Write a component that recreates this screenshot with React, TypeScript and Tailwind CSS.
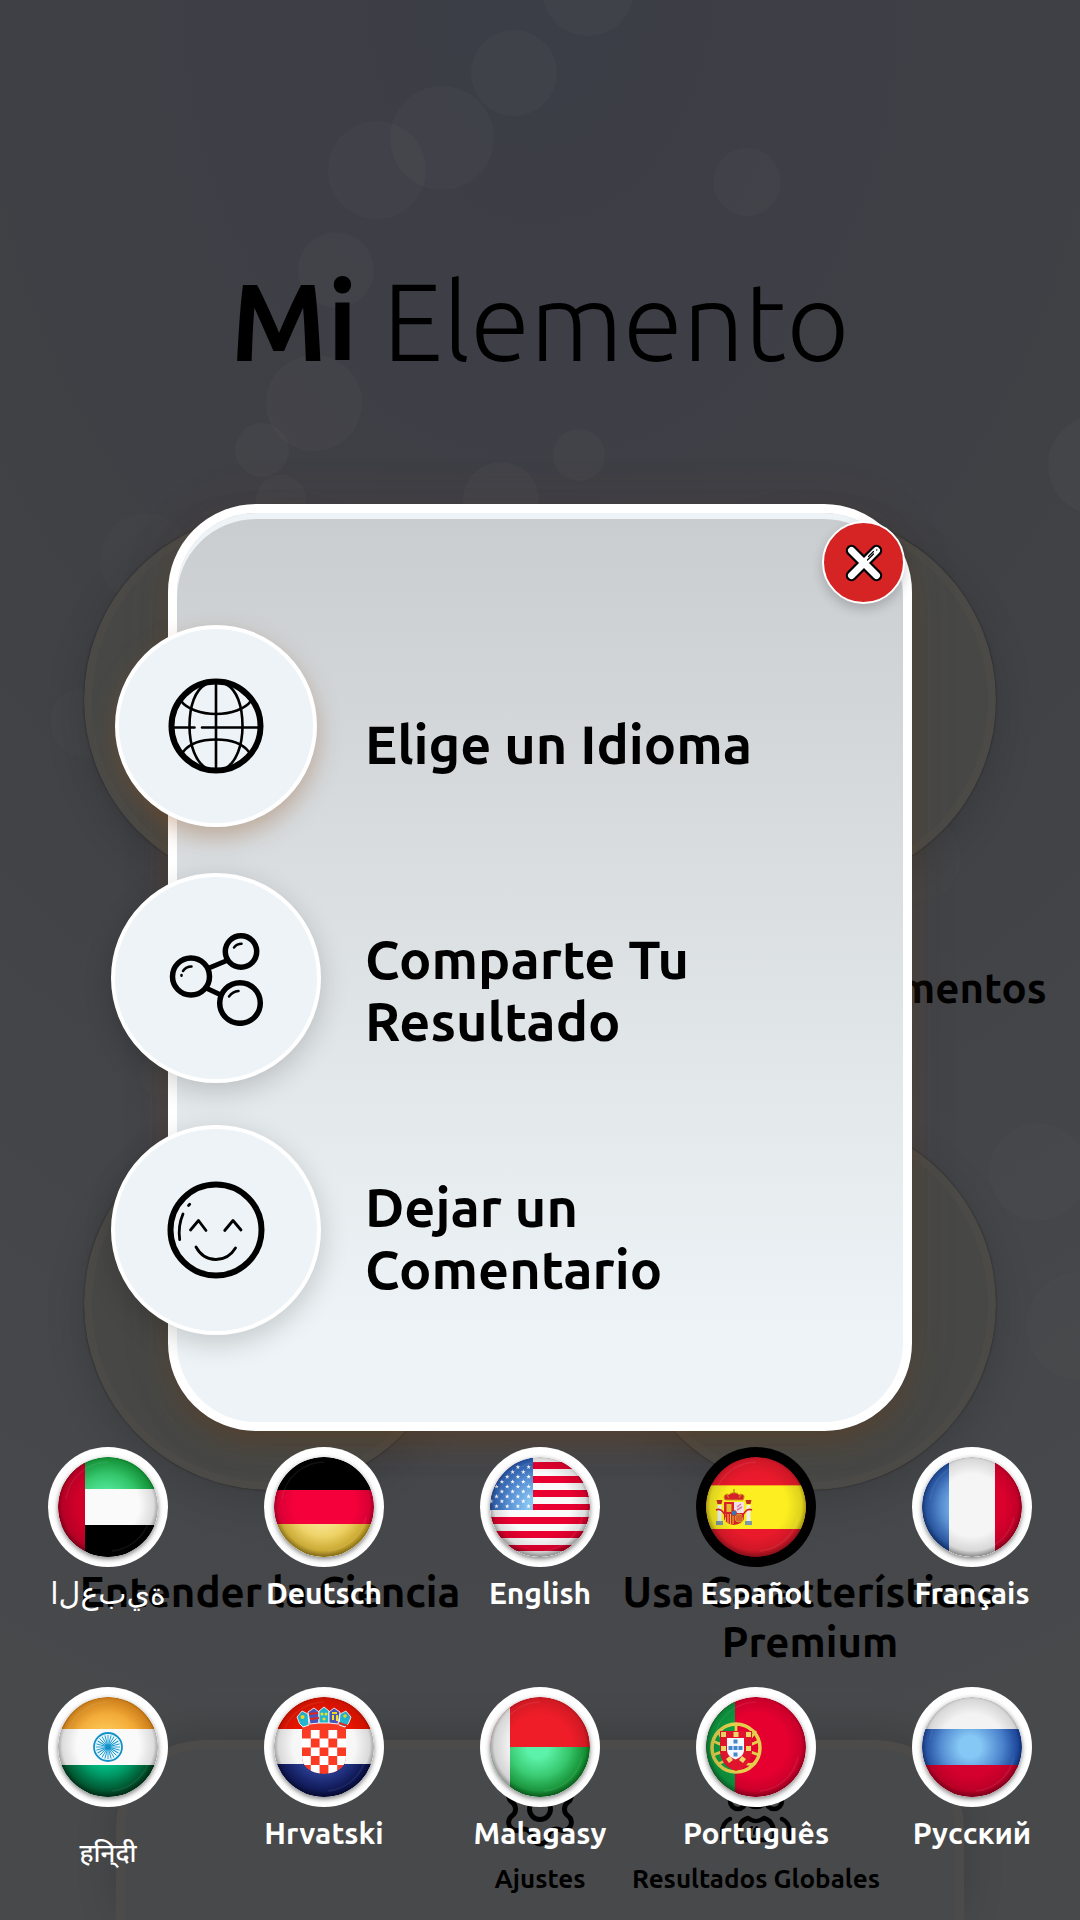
import type { ReactNode } from "react";
import { Settings } from "lucide-react";

/* Soft bubbles floating behind the page: x, y of the centre and radius. */
const bubbles = [
  [588, -10, 46], [514, 73, 43], [442, 138, 52], [377, 170, 49], [747, 182, 34],
  [336, 270, 38], [314, 403, 48], [262, 450, 27], [281, 500, 25], [579, 455, 26],
  [501, 500, 38], [1098, 465, 50],
];

/* The fainter ones, lower on the page. */
const faintBubbles = [
  [146, 559, 46], [85, 722, 35], [918, 858, 43], [1038, 1172, 49], [1080, 1326, 54], [160, 1075, 20],
];

function GlobeIcon() {
  return (
    <svg viewBox="0 0 96 96" className="size-24" fill="none" stroke="#000" strokeLinecap="round" aria-hidden="true">
      <circle cx="48" cy="48" r="44.5" strokeWidth="6" />
      <g strokeWidth="2.6">
        <path d="M48 5v86M6 49.5h20.5M34 49.5h56" />
        <path d="M13 23c6 8 20 13 35 13s29-5 35-13M15 74c6-8 18-12.500 33-12.500S75 66 81 74" />
        <path d="M38 6C27 12 21.500 28 21.500 48S28 84 38 90M58 6c11 6 16.500 22 16.500 42S68 84 58 90" />
      </g>
    </svg>
  );
}

function ShareIcon() {
  return (
    <svg viewBox="0 0 96 96" className="size-24" fill="none" stroke="#000" strokeLinecap="round" aria-hidden="true">
      <g strokeWidth="5.500">
        <circle cx="23" cy="46.500" r="18.500" />
        <circle cx="73" cy="21.500" r="15.700" />
        <circle cx="72" cy="73" r="20.300" />
        <path d="M41 38l18-7.500M38 58l15 7" strokeWidth="5" />
      </g>
      <g strokeWidth="2.500">
        <path d="M15 41c2-3 5-4.500 8.500-4.500M13.500 45v.8" />
        <path d="M66 17.500c2-2.500 4.500-3.700 7.500-3.700M61 66.500c2.500-3.500 5.500-5.200 9.500-5.500" />
      </g>
    </svg>
  );
}

function SmileIcon() {
  return (
    <svg viewBox="0 0 98 98" className="size-[98px]" fill="none" stroke="#000" strokeLinecap="round" strokeLinejoin="round" aria-hidden="true">
      <circle cx="49" cy="49" r="45.500" strokeWidth="6" />
      <g strokeWidth="2.800">
        <path d="M23.500 49l8-9.500 7.500 10M57.700 49.500l8.300-10 8 9.500" />
        <path d="M29 66c9 16.500 30 16.500 39.500 1M16 33c-3.500 8-4.500 17-3.300 25.600M21.500 24.500l1.200-1.200" />
      </g>
    </svg>
  );
}

function CrossIcon() {
  return (
    <svg viewBox="0 0 38 38" className="size-[38px]" fill="none" strokeLinecap="round" aria-hidden="true">
      <path d="M6.500 6.500l25 25M31.500 6.500l-25 25" stroke="#000" strokeWidth="11.500" />
      <path d="M6.500 6.500l25 25M31.500 6.500l-25 25" stroke="#fff" strokeWidth="7" />
      <path d="M22.500 16l6-6M31.500 6.200l.4-.4M23.500 12.500l5-5" stroke="#000" strokeWidth="1.200" />
    </svg>
  );
}

function PeopleIcon() {
  return (
    <svg viewBox="0 0 84 84" className="size-[84px]" fill="none" stroke="#000" strokeWidth="4.500" strokeLinecap="round" strokeLinejoin="round" aria-hidden="true">
      <circle cx="42" cy="27" r="13" />
      <circle cx="24" cy="34" r="8" />
      <circle cx="60" cy="34" r="8" />
      <path d="M24 73v-6c0-9 4-14 10-16 5 4 11 4 16 0 6 2 10 7 10 16v6z" />
      <path d="M8 72v-5c0-8 3-13 8-15M76 72v-5c0-8-3-13-8-15" />
      <path d="M34 68c0-4 2-7 4-8M40 67c0-3 1-6 3-7" strokeWidth="2" />
    </svg>
  );
}

/* A flag on a glossy ball; `children` is drawn on a 100 x 100 field. */
function Ball({ id, children }: { id: string; children: ReactNode }) {
  return (
    <svg viewBox="0 0 100 100" className="size-[100px] rounded-full shadow-[0_2px_5px_rgba(0,0,0,0.5)]" aria-hidden="true">
      <defs>
        <clipPath id={"c-" + id}><circle cx="50" cy="50" r="50" /></clipPath>
        <radialGradient id={"d-" + id} cx="50%" cy="48%" r="52%">
          <stop offset="0.6" stopColor="#000" stopOpacity="0" />
          <stop offset="0.88" stopColor="#000" stopOpacity="0.12" />
          <stop offset="1" stopColor="#000" stopOpacity="0.45" />
        </radialGradient>
      </defs>
      <g clipPath={"url(#c-" + id + ")"}>
        {children}
        <circle cx="50" cy="50" r="50" fill={"url(#d-" + id + ")"} />
        <path d="M8 42A43 43 0 0 1 50 5M92 60A43 43 0 0 1 54 94" fill="none" stroke="#fff" strokeOpacity="0.07" strokeWidth="1.500" />
      </g>
    </svg>
  );
}

/* Shine that lightens a coloured band towards the ball's middle. */
function Shine({ id, color }: { id: string; color: string }) {
  return (
    <radialGradient id={id} gradientUnits="userSpaceOnUse" cx="48" cy="50" r="54">
      <stop offset="0.2" stopColor={color} stopOpacity="1" />
      <stop offset="1" stopColor={color} stopOpacity="0" />
    </radialGradient>
  );
}

const starPath = "M0-2.300l.6 1.600h1.700L.9.300l.5 1.700L0 1l-1.400 1 .5-1.700L-2.300-.7h1.700z";

const stars: number[][] = [];
for (let row = 0; row < 9; row++) {
  for (let col = 0; col < 4; col++) {
    stars.push([(row % 2 ? 33.300 : 38.600) - col * 10.700, 10 + row * 4.900]);
  }
}

const flags: Record<string, ReactNode> = {
  ae: (
    <>
      <defs><Shine id="ae-s" color="#5cf0a8" /></defs>
      <path d="M0 0h100v32H0z" fill="#0f9e33" />
      <path d="M0 0h100v32H0z" fill="url(#ae-s)" />
      <path d="M0 32h100v36H0z" fill="#fafafa" />
      <path d="M0 68h100v32H0z" fill="#000" />
      <path d="M0 0h27v100H0z" fill="#d0002a" />
    </>
  ),
  de: (
    <>
      <defs><Shine id="de-s" color="#fbeaa0" /></defs>
      <path d="M0 0h100v33H0z" fill="#000" />
      <path d="M0 33h100v34H0z" fill="#f5003a" />
      <path d="M0 67h100v33H0z" fill="#dfb51f" />
      <path d="M0 67h100v33H0z" fill="url(#de-s)" />
    </>
  ),
  us: (
    <>
      <defs><Shine id="us-s" color="#86c4f2" /></defs>
      <path d="M0 0h100v100H0z" fill="#fafafa" />
      <path d="M0 5h100v7H0zM0 19h100v7H0zM0 33h100v7H0zM0 47h100v6H0zM0 60h100v7H0zM0 74h100v7H0zM0 88h100v6H0z" fill="#ea0030" />
      <path d="M0 0h43v53H0z" fill="#1d4fae" />
      <path d="M0 0h43v53H0z" fill="url(#us-s)" />
      {stars.map(([x, y]) => (
        <path key={x + "-" + y} d={starPath} transform={"translate(" + x + " " + y + ")"} fill="#fff" />
      ))}
    </>
  ),
  es: (
    <>
      <path d="M0 0h100v100H0z" fill="#ea1a2c" />
      <path d="M0 28h100v44H0z" fill="#fcee20" />
      <path d="M0 28h100v1H0z" fill="#f7a520" />
      <path d="M18 45h20v17q-2 5-10 6-8-1-10-6z" fill="#d8202c" />
      <path d="M28 45h10v11H28z" fill="#f3dfe6" />
      <path d="M20.500 47h5v8h-5z" fill="#e2ba2c" />
      <path d="M19.500 57v7M22 57v9M24.500 57v10M27 57v10" stroke="#f2c832" strokeWidth="1" />
      <circle cx="33" cy="61" r="4" fill="#d8642c" stroke="#c9a128" />
      <path d="M31 50l4-3M31 53l5-3" stroke="#d47b9b" strokeWidth="1.500" />
      <circle cx="28" cy="56" r="2.600" fill="#3378bb" stroke="#c0392b" strokeWidth="0.800" />
      <path d="M19 43c-3-5 2-7 4-5 1-3 9-3 10 0 3-2 7 0 4 5z" fill="#d8202c" stroke="#c9971c" strokeWidth="1" />
      <path d="M28 32v4M21 38l2 3M35 38l-2 3" stroke="#b88918" strokeWidth="1.300" />
      <path d="M11.500 48h4v16h-4zM40.500 48h4v16h-4z" fill="#eceef0" />
      <path d="M10 64h7v4h-7zM39 64h7v4h-7z" fill="#7d98a8" />
      <path d="M10.500 43h6l-1 4h-4zM39.500 43h6l-1 4h-4z" fill="#c22c22" />
      <path d="M10 53q4-2 7 2t2 5M46 53q-4-2-7 2t-2 5" stroke="#d8202c" strokeWidth="1.600" fill="none" />
    </>
  ),
  fr: (
    <>
      <defs><Shine id="fr-s" color="#8cc6f5" /></defs>
      <path d="M0 0h100v100H0z" fill="#f5f5f5" />
      <path d="M0 0h27v100H0z" fill="#10409f" />
      <path d="M0 0h27v100H0z" fill="url(#fr-s)" />
      <path d="M73 0h27v100H73z" fill="#dc002d" />
    </>
  ),
  in: (
    <>
      <defs><Shine id="in-o" color="#ffcf5c" /><Shine id="in-g" color="#00d69a" /></defs>
      <path d="M0 0h100v32H0z" fill="#e88a17" />
      <path d="M0 0h100v32H0z" fill="url(#in-o)" />
      <path d="M0 32h100v36H0z" fill="#fafafa" />
      <path d="M0 68h100v32H0z" fill="#003f1a" />
      <path d="M0 68h100v32H0z" fill="url(#in-g)" />
      <circle cx="50" cy="50" r="14" fill="#e9f6fb" stroke="#1391c9" strokeWidth="1.800" />
      {Array.from({ length: 24 }, (_, i) => (
        <path key={i} d="M50 48V38" transform={"rotate(" + i * 15 + " 50 50)"} stroke="#1b9ad0" strokeWidth="0.900" />
      ))}
      <circle cx="50" cy="50" r="2.600" fill="#1391c9" />
    </>
  ),
  hr: (
    <>
      <defs><Shine id="hr-s" color="#3c57b4" /></defs>
      <path d="M0 0h100v32H0z" fill="#ea1500" />
      <path d="M0 32h100v35H0z" fill="#f7f7f7" />
      <path d="M0 67h100v33H0z" fill="#060b4a" />
      <path d="M0 67h100v33H0z" fill="url(#hr-s)" />
      <clipPath id="hr-k"><path d="M28 27q22-5 44 0v32q0 16-22 18-22-2-22-18z" /></clipPath>
      <g clipPath="url(#hr-k)">
        <path d="M28 20h44v60H28z" fill="#fb3a24" />
        <path d="M36.800 33h8.800v8.500h-8.800zM54.400 33h8.800v8.500h-8.800zM28 41.500h8.800v9H28zM45.600 41.500h8.800v9h-8.800zM63.200 41.500H72v9h-8.800zM36.800 50.500h8.800V59h-8.800zM54.400 50.500h8.800V59h-8.800zM28 59h8.800v9H28zM45.600 59h8.800v9h-8.800zM63.200 59H72v9h-8.800zM36.800 68h8.800v9h-8.800zM54.400 68h8.800v9h-8.800z" fill="#fff" />
      </g>
      <g stroke="#fff" strokeWidth="0.900" strokeLinejoin="round">
        <path d="M23 20l5-6 6 3 1 11-6 2q-4-2-6-10z" fill="#24b5cf" />
        <path d="M34 15l6-4 5 4v11l-9 1z" fill="#4a55b8" />
        <path d="M45 14l5-4 5 4v12H45z" fill="#24b5cf" />
        <path d="M55 15l5-4 6 4-2 12-9-1z" fill="#4a55b8" />
        <path d="M66 17l6-3 5 6q-2 8-6 10l-6-2z" fill="#24b5cf" />
      </g>
      <path d="M35 17l9-1M36 22l9-1M65 26l9 3" stroke="#e52620" strokeWidth="2.200" />
      <path d="M58 16h5M59 18v5M63 18v6" stroke="#f3df21" strokeWidth="2" />
      <circle cx="28.500" cy="20" r="2" fill="#f3df21" />
      <circle cx="48" cy="17" r="1.500" fill="#f3df21" />
      <circle cx="52" cy="17" r="1.500" fill="#f3df21" />
      <circle cx="50" cy="22" r="1.500" fill="#f3df21" />
      <circle cx="71" cy="19" r="1.800" fill="#f3df21" />
    </>
  ),
  mg: (
    <>
      <defs><Shine id="mg-s" color="#5cf2a9" /></defs>
      <path d="M0 0h100v50H0z" fill="#ee1d28" />
      <path d="M0 50h100v50H0z" fill="#0c9528" />
      <path d="M0 50h100v50H0z" fill="url(#mg-s)" />
      <path d="M0 0h20v100H0z" fill="#f1f1f1" />
    </>
  ),
  pt: (
    <>
      <path d="M0 0h100v100H0z" fill="#e60030" />
      <path d="M0 0h29v100H0z" fill="#0d9b41" />
      <g fill="none" stroke="#e3cf4c">
        <circle cx="30" cy="51" r="24" strokeWidth="3.500" />
        <path d="M7 44q23 12 46 0M7 58q23-10 46 0M30 26v50M12 34q20 40 38 32M12 67q20-8 38-33" strokeWidth="2.800" />
      </g>
      <path d="M14 34h32v21q-2 15-16 19-14-4-16-19z" fill="#e0142c" />
      <g fill="#ecd668">
        <path d="M15 35h5v5h-5zM27.500 35h5v5h-5zM40 35h5v5h-5zM15 49h5v5h-5zM40 49h5v5h-5zM20 62l4-3 3 4-4 3zM40 62l-4-3-3 4 4 3z" />
      </g>
      <path d="M21 41h17v13q-1 6-8.500 8.500Q22 60 21 54z" fill="#f6f8fc" />
      <path d="M27.500 42.500h4v4h-4zM22.500 49h4v4h-4zM27.500 49h4v4h-4zM32.500 49h4v4h-4zM27.500 55.500h4v4h-4z" fill="#4488cc" />
    </>
  ),
  ru: (
    <>
      <defs><Shine id="ru-s" color="#86c8f5" /></defs>
      <path d="M0 0h100v32H0z" fill="#f3f3f3" />
      <path d="M0 32h100v36H0z" fill="#123fa5" />
      <path d="M0 32h100v36H0z" fill="url(#ru-s)" />
      <path d="M0 68h100v32H0z" fill="#d4002d" />
    </>
  ),
};

const languages = [
  { code: "ae", name: "ا\u200cل\u200cع\u200cب\u200cي\u200cة" },
  { code: "de", name: "Deutsch" },
  { code: "us", name: "English" },
  { code: "es", name: "Español", active: true },
  { code: "fr", name: "Français" },
  { code: "in", name: "हनि्दी" },
  { code: "hr", name: "Hrvatski" },
  { code: "mg", name: "Malagasy" },
  { code: "pt", name: "Português" },
  { code: "ru", name: "Русский" },
];

function labelClass(code: string) {
  if (code === "ae") return "text-[30px] leading-9 font-medium [direction:ltr] [unicode-bidi:bidi-override]";
  if (code === "in") return "text-[26px] leading-[76px] font-medium";
  return "text-[30px] leading-9 font-semibold";
}

const menu = [
  { label: "Elige un Idioma", icon: <GlobeIcon />, active: true, pad: "pt-9" },
  { label: "Comparte Tu Resultado", icon: <ShareIcon />, pad: "pt-6" },
  { label: "Dejar un Comentario", icon: <SmileIcon />, pad: "pt-4" },
];

const sections = ["", "Descubre los Elementos", "Entender la Ciencia", "Usa Características Premium"];

function Home() {
  return (
    <main className="flex min-h-screen flex-col">
      <h1 className="pt-[249px] text-center text-[109px] leading-[144px] font-light">
        <b className="font-bold">Mi</b> Elemento
      </h1>
      <div className="mt-[121px] grid grid-cols-2 gap-y-[105px]">
        {sections.map((label, i) => (
          <section key={i} className="flex flex-col items-center">
            <div className="size-[372px] rounded-full border-8 border-[#4b4a47] bg-[#474846] shadow-[0_12px_40px_rgba(0,0,0,0.14),0_0_2px_rgba(0,0,0,0.5)]" />
            <h2 className="mt-[77px] min-h-[50px] max-w-[500px] text-center text-[42px] leading-[50px] font-semibold">{label}</h2>
          </section>
        ))}
      </div>
      <footer className="mx-[116px] mt-[73px] grid flex-1 grid-cols-3 rounded-t-[88px] border-[9px] border-b-0 border-[#4d4b4a] bg-[#48494a] px-[91px] pt-[18px] shadow-[0_-8px_40px_rgba(0,0,0,0.16)]">
        <div className="col-start-2 flex flex-col items-center gap-3">
          <Settings size={84} strokeWidth={1.4} aria-hidden="true" />
          <span className="text-[26px] leading-8 font-semibold">Ajustes</span>
        </div>
        <div className="flex flex-col items-center gap-3">
          <PeopleIcon />
          <span className="text-[26px] leading-8 font-semibold whitespace-nowrap">Resultados Globales</span>
        </div>
      </footer>
    </main>
  );
}

function OptionsDialog() {
  return (
    <div role="dialog" aria-label="Opciones" className="relative mx-[168px] rounded-[88px] border-[9px] border-white bg-linear-to-b from-[#cacdd0] to-[#edf3f6] to-90% pt-[87px] pb-[66px] shadow-[inset_0_6px_0_#edf3f6,0_0_50px_rgba(110,70,50,0.12),0_16px_32px_-8px_rgba(100,58,20,0.5)]">
      <button type="button" aria-label="Cerrar" className="absolute top-2 -right-[2px] flex size-[83px] items-center justify-center rounded-full border-2 border-white bg-[#d62424] shadow-[0_5px_12px_rgba(0,0,0,0.2)]">
        <CrossIcon />
      </button>
      <ul className="-ml-[66px]">
        {menu.map((item) => (
          <li key={item.label}>
            <button type="button" className="flex h-[252px] w-full items-center gap-11 text-left">
              <span className="flex w-[210px] shrink-0 justify-center">
                <span
                  className={
                    item.active
                      ? "flex size-[202px] items-center justify-center rounded-full border-4 border-white bg-[#edf3f6] shadow-[0_10px_24px_rgba(140,80,30,0.36)]"
                      : "flex size-[210px] items-center justify-center rounded-full border-4 border-white bg-[#edf3f6] shadow-[0_8px_28px_rgba(0,0,0,0.18)]"
                  }
                >
                  {item.icon}
                </span>
              </span>
              <span className={"max-w-[400px] text-[54px] leading-[62px] font-semibold " + item.pad}>{item.label}</span>
            </button>
          </li>
        ))}
      </ul>
    </div>
  );
}

function LanguagePicker() {
  return (
    <ul className="relative mt-4 grid grid-cols-5 gap-y-[76px]">
      {languages.map((lang) => (
        <li key={lang.code} className="h-[164px]">
          <button type="button" aria-pressed={!!lang.active} className="flex w-full flex-col items-center gap-2 text-white">
            <span className={lang.active ? "rounded-full bg-black p-2.5" : "rounded-full bg-white p-2.5"}>
              <Ball id={lang.code}>{flags[lang.code]}</Ball>
            </span>
            <span className={"whitespace-nowrap " + labelClass(lang.code)}>{lang.name}</span>
          </button>
        </li>
      ))}
    </ul>
  );
}

export default function App() {
  return (
    <div className="relative isolate min-h-screen overflow-hidden bg-[radial-gradient(ellipse_1400px_1800px_at_50%_0,#3b3e46_0%,#3e3e46_22%,#404145_45%,#444549_70%,#48494b_100%)] font-['Ubuntu','Noto_Sans','DejaVu_Sans',sans-serif] text-black">
      <svg className="absolute inset-0 -z-10 size-full" fill="#fff0c8" aria-hidden="true">
        <g fillOpacity="0.022">
          {bubbles.map(([x, y, r]) => (
            <circle key={x + "-" + y} cx={x} cy={y} r={r} />
          ))}
        </g>
        <g fillOpacity="0.01">
          {faintBubbles.map(([x, y, r]) => (
            <circle key={x + "-" + y} cx={x} cy={y} r={r} />
          ))}
        </g>
      </svg>
      <Home />
      <div className="absolute inset-x-0 top-0 pt-[504px]">
        <OptionsDialog />
        <LanguagePicker />
      </div>
    </div>
  );
}
